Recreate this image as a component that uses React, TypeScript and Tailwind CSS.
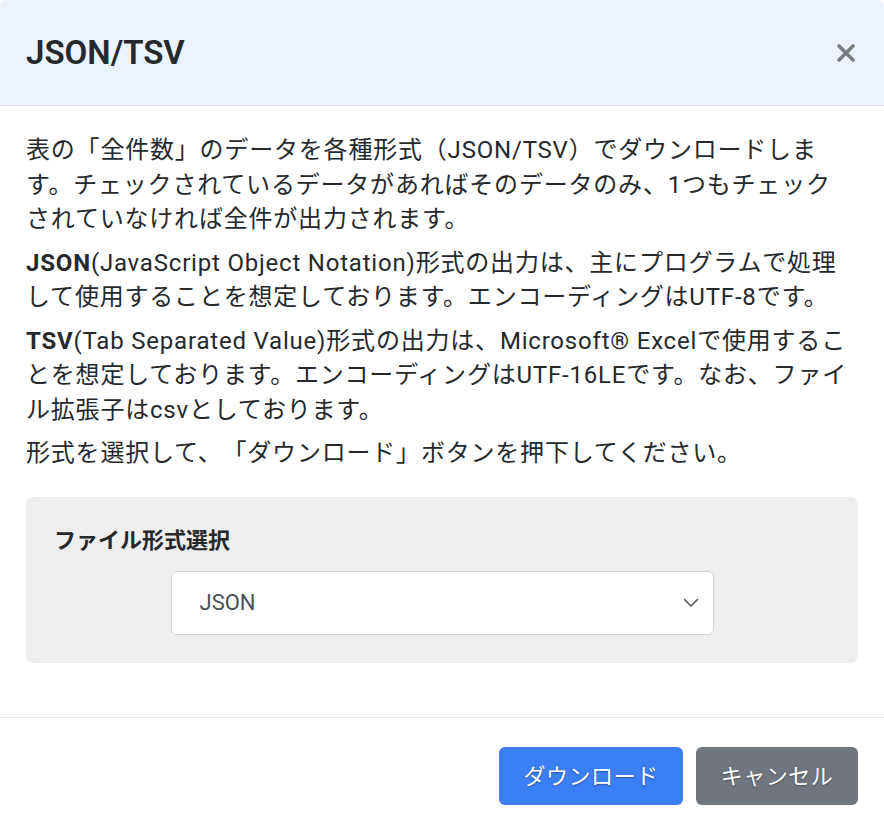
import React, { FunctionComponent } from 'react';

const font = "font-['Roboto','Noto_Sans_CJK_JP',sans-serif]";

const CloseIcon = () => (
  <svg width="20" height="20" viewBox="0 0 20 20" aria-hidden="true">
    <path d="M3 3 L17 17 M17 3 L3 17" stroke="#7a7d80" strokeWidth="3.6" strokeLinecap="round" />
  </svg>
);

const Chevron = () => (
  <svg width="16" height="10" viewBox="0 0 16 10" aria-hidden="true">
    <path d="M1.5 1.5 L8 8 L14.5 1.5" fill="none" stroke="#555" strokeWidth="1.6" strokeLinecap="round" strokeLinejoin="round" />
  </svg>
);

const App: FunctionComponent = () => {
  return (
    <div className={`w-[884px] h-[830px] flex flex-col bg-white text-[#26292c] [text-spacing-trim:space-all] ${font}`}>
      <div className="h-[106px] shrink-0 flex items-center justify-between px-[26px] bg-[#ebf3fe] border-b border-[#e4e6ea] rounded-t-md">
        <h1 className="text-[33px] font-semibold leading-none">JSON/TSV</h1>
        <button className="mr-[2px]">
          <CloseIcon />
        </button>
      </div>

      <div className="flex-1 px-[26px] pt-[27px]">
        <div className="pr-[4px] text-[24px] leading-[34.5px] tracking-[0.8px]">
          <p className="mb-[9px]">
            表の「全件数」のデータを各種形式（JSON/TSV）でダウンロードします。チェックされているデータがあればそのデータのみ、1つもチェックされていなければ全件が出力されます。
          </p>
          <p className="mb-[9px]">
            <span className="font-bold">JSON</span>(JavaScript Object Notation)形式の出力は、主にプログラムで処理して使用することを想定しております。エンコーディングはUTF-8です。
          </p>
          <p className="mb-[9px]">
            <span className="font-bold">TSV</span>(Tab Separated Value)形式の出力は、Microsoft® Excelで使用することを想定しております。エンコーディングはUTF-16LEです。なお、ファイル拡張子はcsvとしております。
          </p>
          <p>形式を選択して、「ダウンロード」ボタンを押下してください。</p>
        </div>

        <div className="mt-[26px] h-[166px] bg-[#eeeeee] rounded-lg px-[28px] pt-[29px]">
          <div className="text-[22px] leading-[30px] font-bold">ファイル形式選択</div>
          <div className="mt-[15px] mx-auto w-[543px] h-[64px] bg-white border border-[#d2d4d7] rounded-md flex items-center justify-between pl-[28px] pr-[14px]">
            <span className="text-[22px] text-[#495057]">JSON</span>
            <Chevron />
          </div>
        </div>
      </div>

      <div className="h-[113px] shrink-0 border-t border-[#e6e7e9] flex items-start justify-end gap-[13px] px-[26px] pt-[29px]">
        <button className="w-[184px] h-[58px] rounded-md bg-[#3b7ff5] text-white text-[22px] tracking-[0.5px] [text-shadow:0_1px_2px_rgba(0,0,0,0.35)]">
          ダウンロード
        </button>
        <button className="w-[162px] h-[58px] rounded-md bg-[#71767e] text-white text-[22px] tracking-[0.5px] [text-shadow:0_1px_2px_rgba(0,0,0,0.35)]">
          キャンセル
        </button>
      </div>
    </div>
  );
};

export default App;
